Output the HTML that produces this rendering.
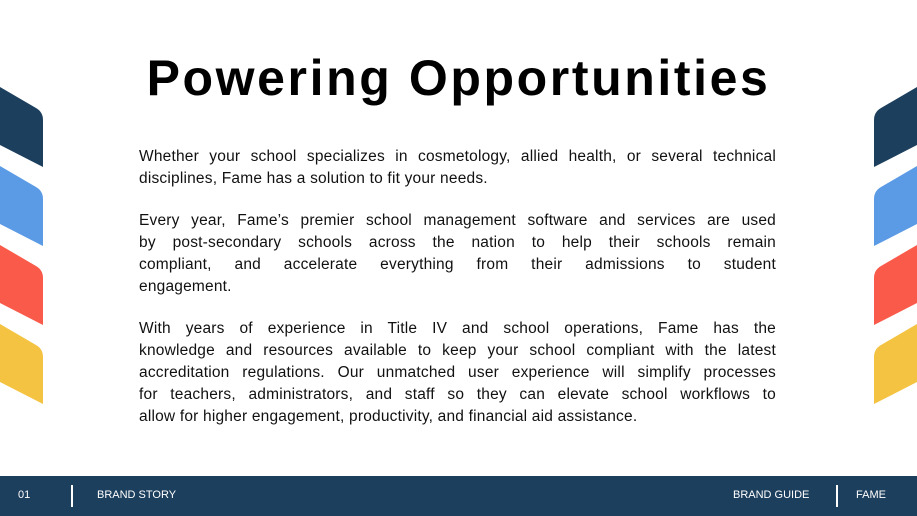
<!DOCTYPE html>
<html><head><meta charset="utf-8"><style>
body{margin:0;width:917px;height:516px;background:#fff;position:relative;overflow:hidden;font-family:"Liberation Sans",sans-serif}
h1{position:absolute;top:48px;left:0;width:917px;text-align:center;margin:0;font-size:50px;font-weight:bold;letter-spacing:2.6px;color:#000;line-height:60px}
.txt{position:absolute;left:139px;width:637px;top:146px;font-size:15.5px;letter-spacing:0.2px;line-height:22px;color:#111}
.txt p{margin:0 0 20px}
.txt span{display:block;white-space:nowrap;text-align:justify;text-align-last:justify}
.txt span.l{text-align-last:left}
.foot{position:absolute;left:0;top:476px;width:917px;height:40px;background:#1d3f5e;color:#fff;font-size:11px}
.foot span{position:absolute;top:13px}
.bar{position:absolute;top:9px;width:2px;height:22px;background:#fff}
</style></head><body>
<svg width="917" height="516" style="position:absolute;left:0;top:0">
<g>
<path d="M0 87 L36 108 Q43 112 43 120 L43 167 L0 145Z" fill="#1d3f5e"/>
<path d="M0 166 L36 187 Q43 191 43 199 L43 246 L0 224Z" fill="#5b9be6"/>
<path d="M0 245 L36 266 Q43 270 43 278 L43 325 L0 303Z" fill="#fa5a4a"/>
<path d="M0 324 L36 345 Q43 349 43 357 L43 404 L0 382Z" fill="#f5c342"/>
</g>
<g transform="translate(917,0) scale(-1,1)">
<path d="M0 87 L36 108 Q43 112 43 120 L43 167 L0 145Z" fill="#1d3f5e"/>
<path d="M0 166 L36 187 Q43 191 43 199 L43 246 L0 224Z" fill="#5b9be6"/>
<path d="M0 245 L36 266 Q43 270 43 278 L43 325 L0 303Z" fill="#fa5a4a"/>
<path d="M0 324 L36 345 Q43 349 43 357 L43 404 L0 382Z" fill="#f5c342"/>
</g>
</svg>
<h1>Powering Opportunities</h1>
<div class="txt">
<p><span>Whether your school specializes in cosmetology, allied health, or several technical</span><span class="l">disciplines, Fame has a solution to fit your needs.</span></p>
<p><span>Every year, Fame’s premier school management software and services are used</span><span>by post-secondary schools across the nation to help their schools remain</span><span>compliant, and accelerate everything from their admissions to student</span><span class="l">engagement.</span></p>
<p><span>With years of experience in Title IV and school operations, Fame has the</span><span>knowledge and resources available to keep your school compliant with the latest</span><span>accreditation regulations. Our unmatched user experience will simplify processes</span><span>for teachers, administrators, and staff so they can elevate school workflows to</span><span class="l">allow for higher engagement, productivity, and financial aid assistance.</span></p>
</div>
<div class="foot">
<span style="left:18px">01</span><div class="bar" style="left:71px"></div>
<span style="left:97px">BRAND STORY</span>
<span style="left:733px">BRAND GUIDE</span><div class="bar" style="left:836px"></div>
<span style="left:856px">FAME</span>
</div>
</body></html>
